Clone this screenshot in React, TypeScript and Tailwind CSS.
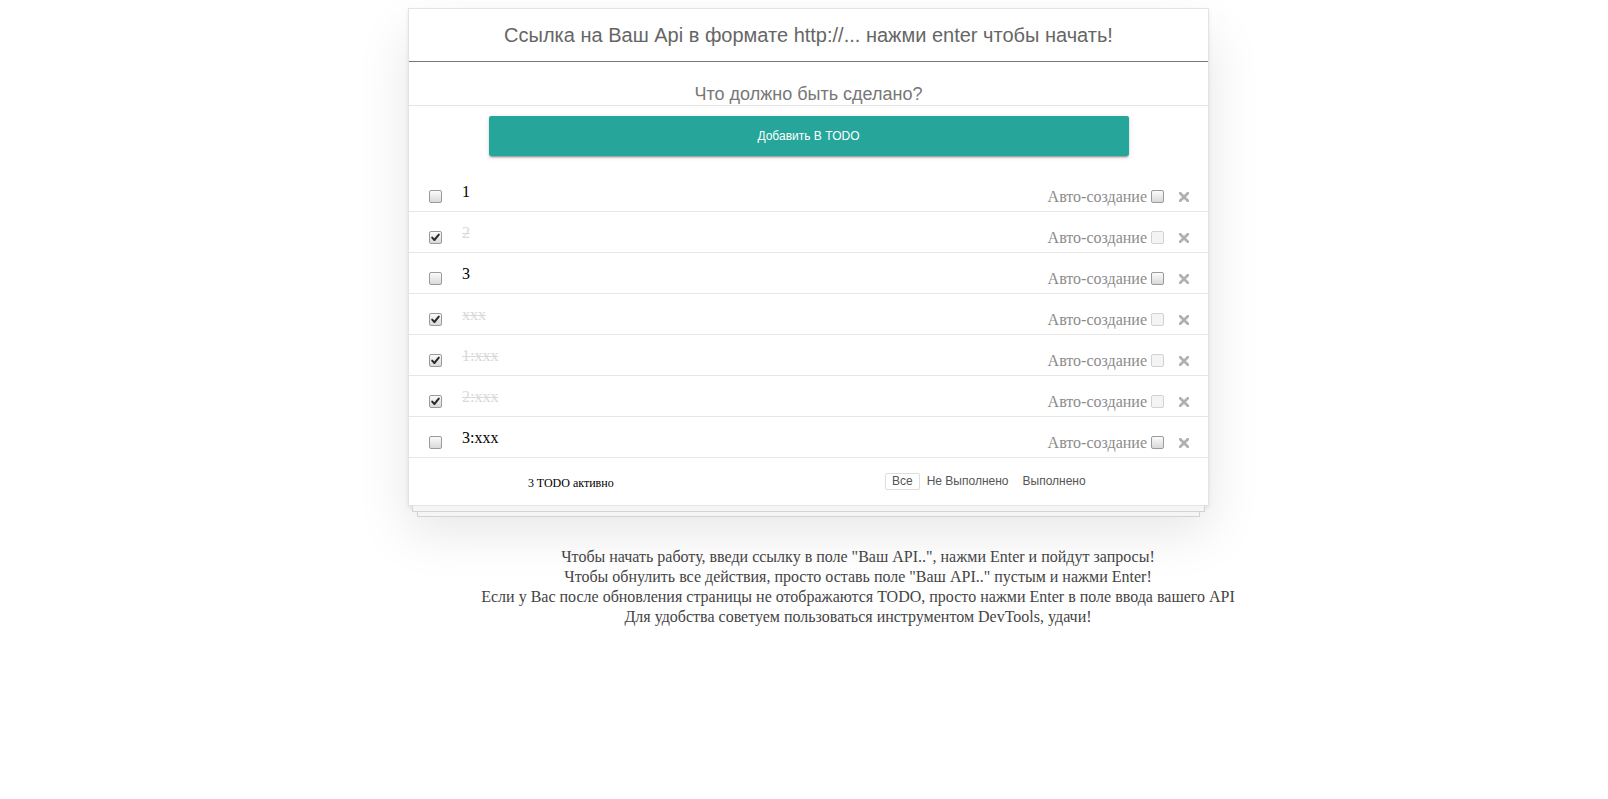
import React from "react";

type Todo = { title: string; done: boolean };

const todos: Todo[] = [
  { title: "1", done: false },
  { title: "2", done: true },
  { title: "3", done: false },
  { title: "xxx", done: true },
  { title: "1:xxx", done: true },
  { title: "2:xxx", done: true },
  { title: "3:xxx", done: false },
];

function Box({ checked, disabled }: { checked?: boolean; disabled?: boolean }) {
  return (
    <span
      className={
        disabled
          ? "relative block w-[13px] h-[13px] rounded-[2px] border border-[#d2d2d2] bg-[#f4f4f4]"
          : "relative block w-[13px] h-[13px] rounded-[2px] border border-[#9a9a9a] bg-linear-to-b from-[#fbfbfb] to-[#d9d9d9]"
      }
    >
      {checked && (
        <svg className="absolute left-0 top-0" width="11" height="11" viewBox="0 0 11 11">
          <path d="M2.2 5.6 L4.4 8 L8.8 2.6" fill="none" stroke="#2b2b2b" strokeWidth="2" strokeLinecap="round" strokeLinejoin="round" />
        </svg>
      )}
    </span>
  );
}

function XIcon() {
  return (
    <svg width="10" height="10" viewBox="0 0 10 10">
      <path d="M1.2 1.2 L8.8 8.8 M8.8 1.2 L1.2 8.8" stroke="#b0b0b0" strokeWidth="2.7" strokeLinecap="square" />
    </svg>
  );
}

export default function App() {
  return (
    <div className="min-h-[799px] bg-white">
      <div className="flex justify-center pl-[9px] pt-[8px]">
        <div className="w-[801px]">
          <div className="bg-white border border-[#e3e3e3] shadow-[0_10px_0_-5px_#f5f5f5,0_10px_0_-4px_#d3d3d3,0_20px_0_-10px_#f5f5f5,0_20px_0_-9px_#d3d3d3,0_2px_4px_0_rgba(0,0,0,0.08),0_25px_50px_0_rgba(0,0,0,0.1)]">
            <div className="h-[53px] flex items-center justify-center border-b border-[#777777] font-['Liberation_Sans',sans-serif] text-[20px] text-[#666666]">
              Ссылка на Ваш Api в формате http://... нажми enter чтобы начать!
            </div>
            <div className="h-[44px] flex items-end justify-center border-b border-[#e4e4e4] font-['Liberation_Sans',sans-serif] text-[18px] leading-[21px] text-[#777777]">
              Что должно быть сделано?
            </div>
            <div className="flex justify-center pt-[10px]">
              <button className="w-[640px] h-[40px] rounded-[2px] bg-[#26a69a] text-white font-['Liberation_Sans',sans-serif] text-[12px] shadow-[0_2px_2px_0_rgba(0,0,0,0.14),0_1px_5px_0_rgba(0,0,0,0.12),0_3px_1px_-2px_rgba(0,0,0,0.2)]">
                Добавить В TODO
              </button>
            </div>
            <ul className="mt-[15px] font-['Liberation_Serif',serif]">
              {todos.map((t, i) => (
                <li key={i} className="flex h-[41px] border-b border-[#e6e6e6]">
                  <span className="ml-[20px] mt-[19px]">
                    <Box checked={t.done} />
                  </span>
                  <span
                    className={
                      t.done
                        ? "ml-[20px] mt-[12px] text-[16px] leading-[18px] text-[#d9d9d9] line-through"
                        : "ml-[20px] mt-[12px] text-[16px] leading-[18px] text-black"
                    }
                  >
                    {t.title}
                  </span>
                  <span className="ml-auto mt-[17px] text-[16px] leading-[18px] text-[#8c8c8c]">Авто-создание</span>
                  <span className="ml-[4px] mt-[19px]">
                    <Box disabled={t.done} />
                  </span>
                  <span className="ml-[15px] mr-[19px] mt-[21px]">
                    <XIcon />
                  </span>
                </li>
              ))}
            </ul>
            <div className="h-[47px] flex items-center pl-[119px]">
              <span className="w-[357px] mt-[3px] font-['Liberation_Serif',serif] text-[12px] leading-[14px] text-black">
                3 TODO активно
              </span>
              <ul className="flex font-['Liberation_Sans',sans-serif] text-[12px] leading-[13px] text-[#555555]">
                <li className="px-[6px] py-[1px] border border-[#dedede] rounded-[2px]">Все</li>
                <li className="px-[6px] py-[1px] border border-transparent">Не Выполнено</li>
                <li className="px-[6px] py-[1px] border border-transparent">Выполнено</li>
              </ul>
            </div>
          </div>
          <div className="mt-[41px] ml-[-50px] w-[1000px] text-center whitespace-nowrap font-['Liberation_Serif',serif] text-[16px] leading-[20px] text-[#444444]">
            <p>Чтобы начать работу, введи ссылку в поле "Ваш API..", нажми Enter и пойдут запросы!</p>
            <p>Чтобы обнулить все действия, просто оставь поле "Ваш API.." пустым и нажми Enter!</p>
            <p>Если у Вас после обновления страницы не отображаются TODO, просто нажми Enter в поле ввода вашего API</p>
            <p>Для удобства советуем пользоваться инструментом DevTools, удачи!</p>
          </div>
        </div>
      </div>
    </div>
  );
}
